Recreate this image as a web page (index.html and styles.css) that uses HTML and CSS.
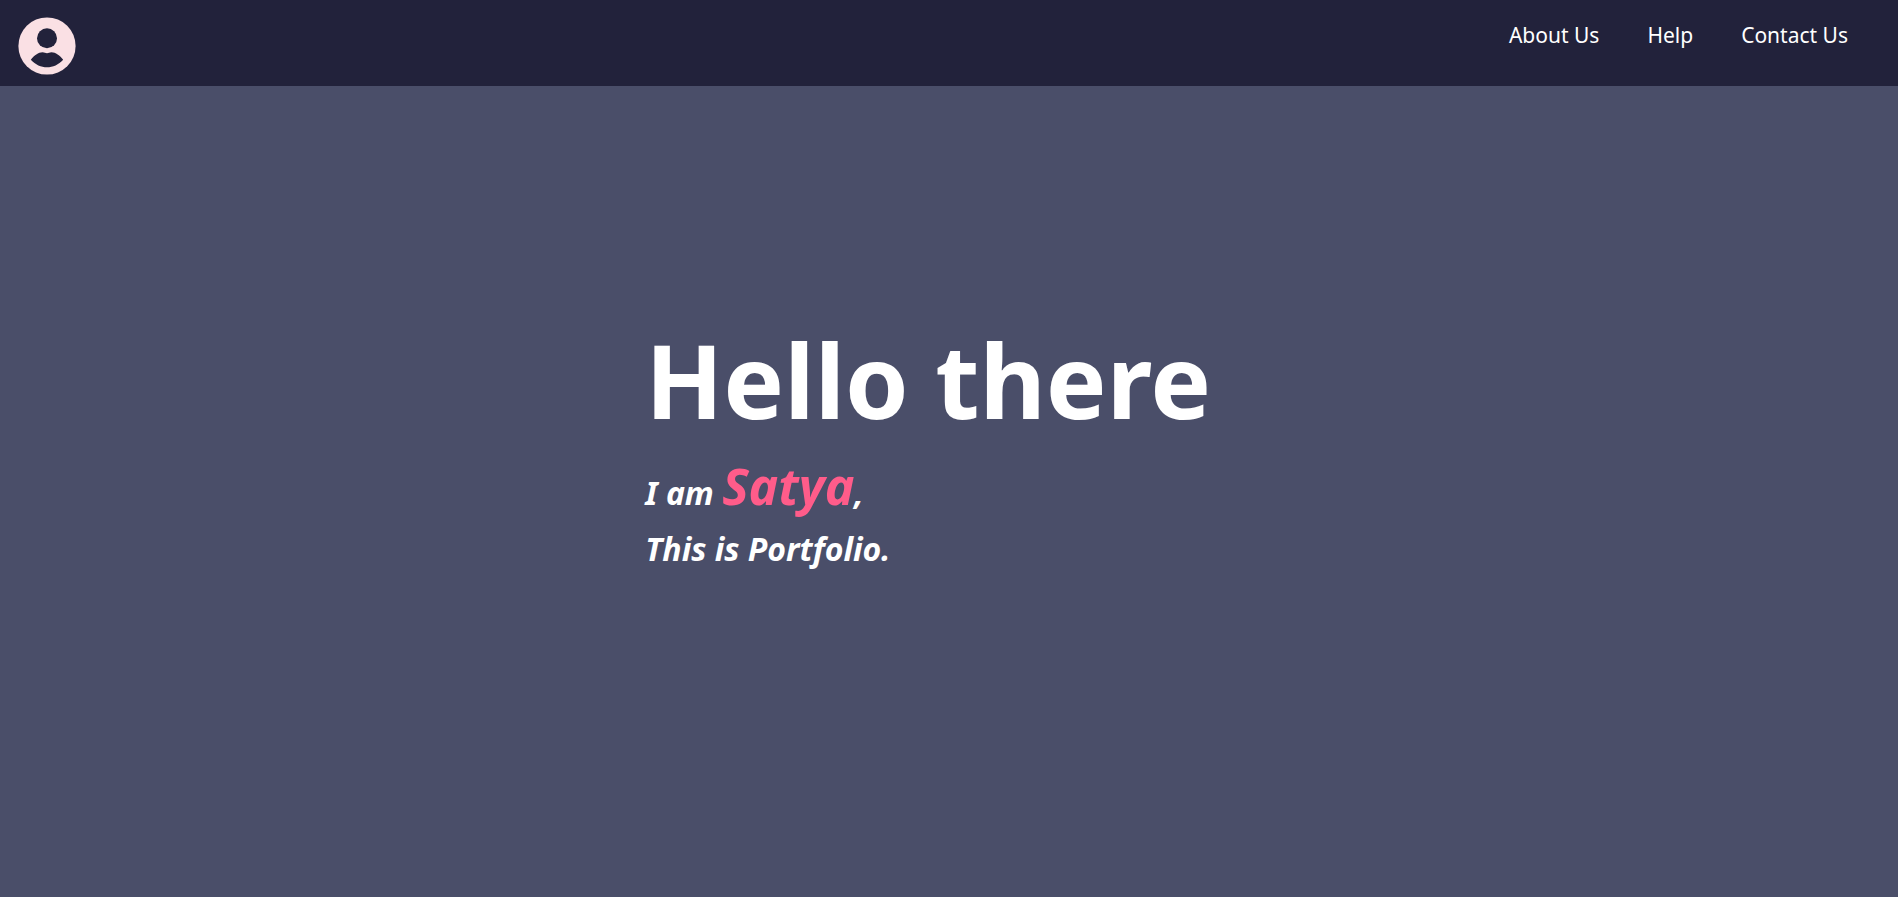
FILE: index.html
```html
<!DOCTYPE html>
<html lang="en">
<head>
<meta charset="utf-8">
<title>Portfolio</title>
<link rel="stylesheet" href="styles.css">
</head>
<body>
<header class="topbar">
  <a class="logo" href="#" aria-label="Profile">
    <svg class="logo-icon" viewBox="0 0 58 58" aria-hidden="true">
      <circle class="badge" cx="29" cy="29" r="28.6"/>
      <circle class="person" cx="29" cy="21.2" r="10"/>
      <path class="person" d="M12.8 42.8C16 38.500 20.500 35.300 24.500 35.300C26.500 35.400 27.500 36.300 29 36.300C30.500 36.300 31.500 35.400 33.500 35.300C37.500 35.300 42 38.500 45.200 42.800C40.500 47.800 35 50.300 29 50.300C23 50.300 17.500 47.800 12.800 42.800Z"/>
    </svg>
  </a>
  <nav class="menu">
    <a href="#">About Us</a>
    <a href="#">Help</a>
    <a href="#">Contact Us</a>
  </nav>
</header>
<main class="hero">
  <div class="intro">
    <h1 class="greeting">Hello there</h1>
    <p class="line">I am <span class="name">Satya</span>,</p>
    <p class="line">This is Portfolio.</p>
  </div>
</main>
</body>
</html>
```
FILE: styles.css
```css
* { box-sizing: border-box; }
body {
  margin: 0;
  min-height: 100vh;
  display: flex;
  flex-direction: column;
  background: #4a4e69;
  color: #fff;
  font-family: "Lucida Sans", "Noto Sans", sans-serif;
}
.topbar {
  display: flex;
  justify-content: space-between;
  align-items: flex-start;
  padding: 17px 50px 11px 18px;
  background: #22223b;
}
.logo { display: block; }
.logo-icon { display: block; width: 58px; height: 58px; }
.badge { fill: #fae0e4; }
.person { fill: #22223b; }
.menu {
  display: flex;
  gap: 48px;
  padding-top: 4px;
  font-size: 21px;
  line-height: 28px;
}
.menu a { color: inherit; text-decoration: none; }
.hero { padding: 226px 0 0 34%; }
.greeting {
  margin: 0;
  font-size: 102px;
  line-height: 136px;
  font-weight: 700;
}
.line {
  margin: 0;
  font-size: 32px;
  line-height: 56px;
  font-weight: 700;
  font-style: italic;
}
.greeting + .line { margin-top: 10px; }
.name { font-size: 50px; color: #ff5c8a; }
```
